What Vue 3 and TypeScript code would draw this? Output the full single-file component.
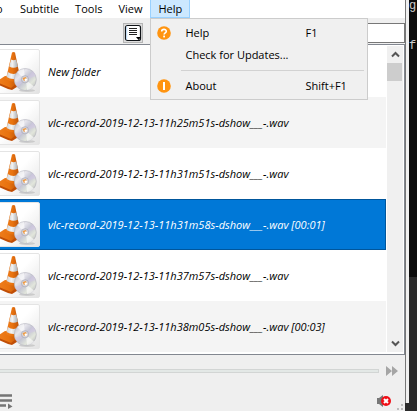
<script setup lang="ts">
import { ref } from 'vue'

interface Track {
  name: string
  duration?: string
}

const menus: string[] = ['Subtitle', 'Tools', 'View', 'Help']
const openMenu = ref('Help')

const tracks: Track[] = [
  { name: 'New folder' },
  { name: 'vlc-record-2019-12-13-11h25m51s-dshow___-.wav' },
  { name: 'vlc-record-2019-12-13-11h31m51s-dshow___-.wav' },
  { name: 'vlc-record-2019-12-13-11h31m58s-dshow___-.wav', duration: '[00:01]' },
  { name: 'vlc-record-2019-12-13-11h37m57s-dshow___-.wav' },
  { name: 'vlc-record-2019-12-13-11h38m05s-dshow___-.wav', duration: '[00:03]' },
]
const selected = ref(3)
const search = ref('')
const position = ref(0)
</script>

<template>
  <div class="desktop">
    <main class="player">
      <nav class="menubar">
        <button class="menu clipped" type="button">o</button>
        <div v-for="menu in menus" :key="menu" class="menu-slot">
          <button
            class="menu"
            :class="{ open: openMenu === menu }"
            type="button"
            @click="openMenu = menu"
          >{{ menu }}</button>
          <div v-if="menu === 'Help' && openMenu === 'Help'" class="dropdown" role="menu">
            <button class="entry" type="button" role="menuitem">
              <svg class="entry-icon" viewBox="0 0 14 14" aria-hidden="true">
                <circle cx="7" cy="7" r="6.8" fill="#ff9410" />
                <path d="M4.7 5.4C4.7 2.7 9.3 2.7 9.3 5.3C9.3 6.9 7.1 6.9 7.1 8.6" fill="none" stroke="#fff" stroke-width="1.6" />
                <rect x="6.2" y="9.6" width="1.8" height="1.8" fill="#fff" />
              </svg>
              <span>Help</span><kbd>F1</kbd>
            </button>
            <button class="entry" type="button" role="menuitem">
              <span class="entry-icon"></span>
              <span>Check for Updates...</span>
            </button>
            <hr />
            <button class="entry" type="button" role="menuitem">
              <svg class="entry-icon" viewBox="0 0 14 14" aria-hidden="true">
                <circle cx="7" cy="7" r="6.8" fill="#ff9410" />
                <rect x="6" y="3" width="2" height="8" fill="#fff" />
              </svg>
              <span>About</span><kbd>Shift+F1</kbd>
            </button>
          </div>
        </div>
      </nav>

      <div class="toolbar">
        <button class="view-mode" type="button" aria-label="Change playlist view">
          <svg viewBox="0 0 18 18" aria-hidden="true">
            <rect x="1.500" y="1.500" width="15" height="15" rx="2" fill="#fff" stroke="#101418" stroke-width="1.200" />
            <path d="M2.700 15.500V2.500" stroke="#b9d8f5" stroke-width="1" />
            <path d="M5 4.500H13M5 6.500H13M5 8.500H13M5 10.500H13" stroke="#222" stroke-width="1" />
            <path d="M12 13H17L14.500 16Z" fill="#000" />
          </svg>
        </button>
        <input v-model="search" class="search" type="text" aria-label="Search playlist" />
      </div>

      <section class="playlist">
        <ul class="tracks" role="listbox" aria-label="Playlist">
          <li
            v-for="(track, i) in tracks"
            :key="track.name"
            class="track"
            :class="{ selected: selected === i }"
            role="option"
            :aria-selected="selected === i"
            @click="selected = i"
          >
            <svg class="thumb" viewBox="0 0 40 45" aria-hidden="true">
              <defs>
                <linearGradient :id="`paper${i}`" x1="0" y1="0" x2="1" y2="1">
                  <stop offset=".45" stop-color="#fff" />
                  <stop offset="1" stop-color="#e2e2e2" />
                </linearGradient>
                <linearGradient :id="`orange${i}`" x1="0" x2="1">
                  <stop offset="0" stop-color="#ee7d1c" />
                  <stop offset=".45" stop-color="#e8720f" />
                  <stop offset="1" stop-color="#b34c08" />
                </linearGradient>
                <linearGradient :id="`white${i}`" x1="0" x2="1">
                  <stop offset="0" stop-color="#cfd3d7" />
                  <stop offset=".35" stop-color="#f4f4f4" />
                  <stop offset="1" stop-color="#a3a9af" />
                </linearGradient>
                <linearGradient :id="`disc${i}`" x1="0" y1="0" x2="1" y2="1">
                  <stop offset="0" stop-color="#b8b9c0" />
                  <stop offset=".3" stop-color="#e6e5ec" />
                  <stop offset=".5" stop-color="#c3c4d2" />
                  <stop offset=".72" stop-color="#e2e6dc" />
                  <stop offset="1" stop-color="#a9a9b0" />
                </linearGradient>
              </defs>
              <path d="M-2 .5H38Q39.5 .5 39.5 2V43Q39.5 44.5 38 44.5H-2Z" :fill="`url(#paper${i})`" stroke="#e4e4e4" />
              <path d="M-1 32L5 28L20 30V36L12 41L8 40L-1 36Z" fill="#c04e06" />
              <path d="M-1 31L5 27L19 28L21 31L11 39L-1 34Z" :fill="`url(#orange${i})`" />
              <path d="M12 3.500Q13.500 2.500 15 3.500L20.500 30Q13 35 6 30Z" :fill="`url(#orange${i})`" />
              <path d="M11 10.500Q13.500 12 16.200 10.500L18 17.500Q13.500 20 9.200 17.500Z" :fill="`url(#white${i})`" />
              <path d="M7.800 23Q13.500 27 19.200 23L20.300 28Q13 32 6.600 28Z" :fill="`url(#white${i})`" />
              <ellipse cx="27" cy="41.500" rx="8" ry="1.500" fill="#b8b8b8" opacity=".6" />
              <circle cx="25.300" cy="30.500" r="11" :fill="`url(#disc${i})`" stroke="#b3b4bd" stroke-width=".6" />
              <path d="M25 30.500L17 23Q20 20 24 20ZM26 31L34 37.500Q31 41 27 41Z" fill="#fff" opacity=".6" />
              <path d="M25 30.500L33 22L36 27ZM25 30.500L15 34L18 38Z" fill="#d0c6e2" opacity=".6" />
              <circle cx="25" cy="30.300" r="3.600" fill="#d6d5dc" stroke="#a0a0ac" stroke-width=".6" />
              <path d="M22.500 29L26 28L27 31.500L24 32Z" fill="#f09a40" />
              <circle cx="25.800" cy="30.800" r="1.300" fill="#fff" />
            </svg>
            <span>{{ track.name }}<template v-if="track.duration">&nbsp;{{ track.duration }}</template></span>
          </li>
        </ul>
        <div class="scrollbar">
          <button type="button" aria-label="Scroll up">
            <svg viewBox="0 0 9 7" aria-hidden="true"><path d="M1 5.500L4.500 2L8 5.500" /></svg>
          </button>
          <div class="grip"></div>
          <button type="button" class="down" aria-label="Scroll down">
            <svg viewBox="0 0 9 7" aria-hidden="true"><path d="M1 1.500L4.500 5L8 1.500" /></svg>
          </button>
        </div>
      </section>

      <div class="seek">
        <input v-model="position" type="range" min="0" max="100" aria-label="Position" disabled />
        <button type="button" aria-label="Faster">
          <svg viewBox="0 0 12 10" aria-hidden="true">
            <path d="M0 0L6 5L0 10ZM6 0L12 5L6 10Z" fill="#a5a5a5" />
          </svg>
        </button>
      </div>

      <div class="controls">
        <button class="list-toggle" type="button" aria-label="Toggle playlist">
          <svg viewBox="0 0 13 15" aria-hidden="true">
            <path d="M0 1.500H12M0 6.500H12M0 11.500H6" stroke="#757575" stroke-width="2.600" />
            <path d="M8 9.500L12.500 12.500L8 15Z" fill="#757575" />
          </svg>
        </button>
        <button class="mute" type="button" aria-label="Unmute">
          <svg viewBox="0 0 14 12" aria-hidden="true">
            <path d="M0 3H2L6 0V12L2 9H0Z" fill="#777" />
            <circle cx="9" cy="6" r="5" fill="#f00f17" />
            <path d="M7 4L11 8M11 4L7 8" stroke="#fff" stroke-width="2" />
          </svg>
        </button>
        <svg class="resize" viewBox="0 0 8 8" aria-hidden="true">
          <path d="M4 1H6V3H4ZM0 5H2V7H0ZM4 5H6V7H4Z" fill="#bcbcbc" />
        </svg>
      </div>
    </main>

    <div class="edge"></div>
    <aside class="terminal">
      <span>g</span>
      <span>f</span>
    </aside>
  </div>
</template>

<style>
body {
  margin: 0;
  background: #2b2b2b;
}
</style>

<style scoped>
.desktop {
  display: flex;
  overflow: hidden;
  font-family: 'Open Sans', 'Noto Sans', sans-serif;
  font-size: 11px;
  line-height: 16px;
  color: #000;
}

button {
  margin: 0;
  padding: 0;
  border: 0;
  background: none;
  font: inherit;
  color: inherit;
}

svg {
  display: block;
}

.player {
  flex: 1;
  min-width: 0;
  background: #efefef;
}

.menubar {
  display: flex;
  height: 18px;
  background: #fff;
}

.menu-slot {
  position: relative;
}

.menu {
  box-sizing: border-box;
  height: 18px;
  padding: 0 7px;
  border: 1px solid transparent;
  border-top: 0;
}

.menu.clipped {
  width: 12px;
  padding: 0;
  border: 0;
  text-indent: -4px;
  text-align: left;
}

.menu.open {
  background: #cce8ff;
  border-color: #99d1ff;
}

.dropdown {
  position: absolute;
  z-index: 1;
  top: 18px;
  left: 0;
  box-sizing: border-box;
  width: 218px;
  padding: 3px 2px 2px;
  border: 1px solid #ccc;
  background: #f0f0f0;
}

.entry {
  display: flex;
  align-items: center;
  gap: 14px;
  width: 100%;
  height: 22px;
  padding: 0 16px 0 4px;
  text-align: left;
}

.entry-icon {
  width: 14px;
  height: 14px;
}

.entry kbd {
  width: 44px;
  margin-left: auto;
  font: inherit;
}

hr {
  margin: 4px 1px 4px 28px;
  border: 0;
  border-top: 1px solid #d2d2d2;
}

.toolbar {
  display: flex;
  align-items: flex-end;
  justify-content: flex-end;
  gap: 31px;
  box-sizing: border-box;
  height: 26px;
  padding-bottom: 1px;
}

.view-mode {
  padding: 0;
  border: 1px solid #b5b5b5;
  background: #ddd;
}

.view-mode svg {
  width: 18px;
  height: 18px;
}

.search {
  box-sizing: border-box;
  width: 231px;
  height: 20px;
  border: 1px solid #777;
  background: #fff;
}

.playlist {
  display: flex;
  padding: 1px 1px 2px 0;
  border: 1px solid #828790;
  border-left: 0;
  background: #fff;
}

.tracks {
  flex: 1;
  min-width: 0;
  margin: 0 1px 0 0;
  padding: 0;
  list-style: none;
}

.track {
  display: flex;
  align-items: center;
  gap: 8px;
  box-sizing: border-box;
  height: 51px;
  border: 1px solid transparent;
  border-width: 1px 1px 1px 0;
  font-style: italic;
  white-space: nowrap;
}

.track:nth-child(even) {
  background: #f4f4f4;
}

.track.selected {
  border-color: #00569c;
  background: #0078d7;
  color: #fff;
}

.thumb {
  flex: none;
  width: 40px;
  height: 45px;
}

.scrollbar {
  display: flex;
  flex-direction: column;
  width: 16px;
  background: #f0f0f0;
}

.scrollbar button {
  display: grid;
  place-items: center;
  height: 17px;
}

.scrollbar svg {
  width: 9px;
  height: 7px;
  fill: none;
  stroke: #555;
  stroke-width: 2;
}

.grip {
  height: 18px;
  margin-right: 1px;
  background: #cdcdcd;
}

.scrollbar .down {
  margin-top: auto;
}

.seek {
  display: flex;
  align-items: center;
  gap: 7px;
  height: 31px;
  padding-right: 7px;
}

.seek input {
  flex: 1;
  appearance: none;
  box-sizing: border-box;
  min-width: 0;
  height: 4px;
  margin: 0;
  border: 1px solid #d2d5d4;
  border-left: 0;
  background: #e3e8e6;
}

.seek input::-webkit-slider-thumb {
  appearance: none;
  width: 0;
  height: 0;
}

.seek svg {
  width: 12px;
  height: 10px;
}

.controls {
  display: flex;
  align-items: center;
  height: 25px;
}

.list-toggle {
  margin-top: 6px;
}

.list-toggle svg {
  width: 13px;
  height: 15px;
}

.mute {
  margin: 4px 6px 0 auto;
}

.mute svg {
  width: 14px;
  height: 12px;
}

.resize {
  align-self: flex-end;
  width: 8px;
  height: 8px;
}

.edge {
  flex: none;
  width: 3px;
  margin-bottom: 8px;
  border-left: 1px solid #777;
  background: #f0f0f0;
}

.terminal {
  flex: none;
  display: flex;
  flex-direction: column;
  gap: 28px;
  box-sizing: border-box;
  width: 8px;
  overflow: hidden;
  background: linear-gradient(#0c0c0c 277px, #2b2b2b 277px);
  font-family: 'Liberation Mono', monospace;
  font-size: 12px;
  line-height: 12px;
  color: #ccc;
}
</style>
